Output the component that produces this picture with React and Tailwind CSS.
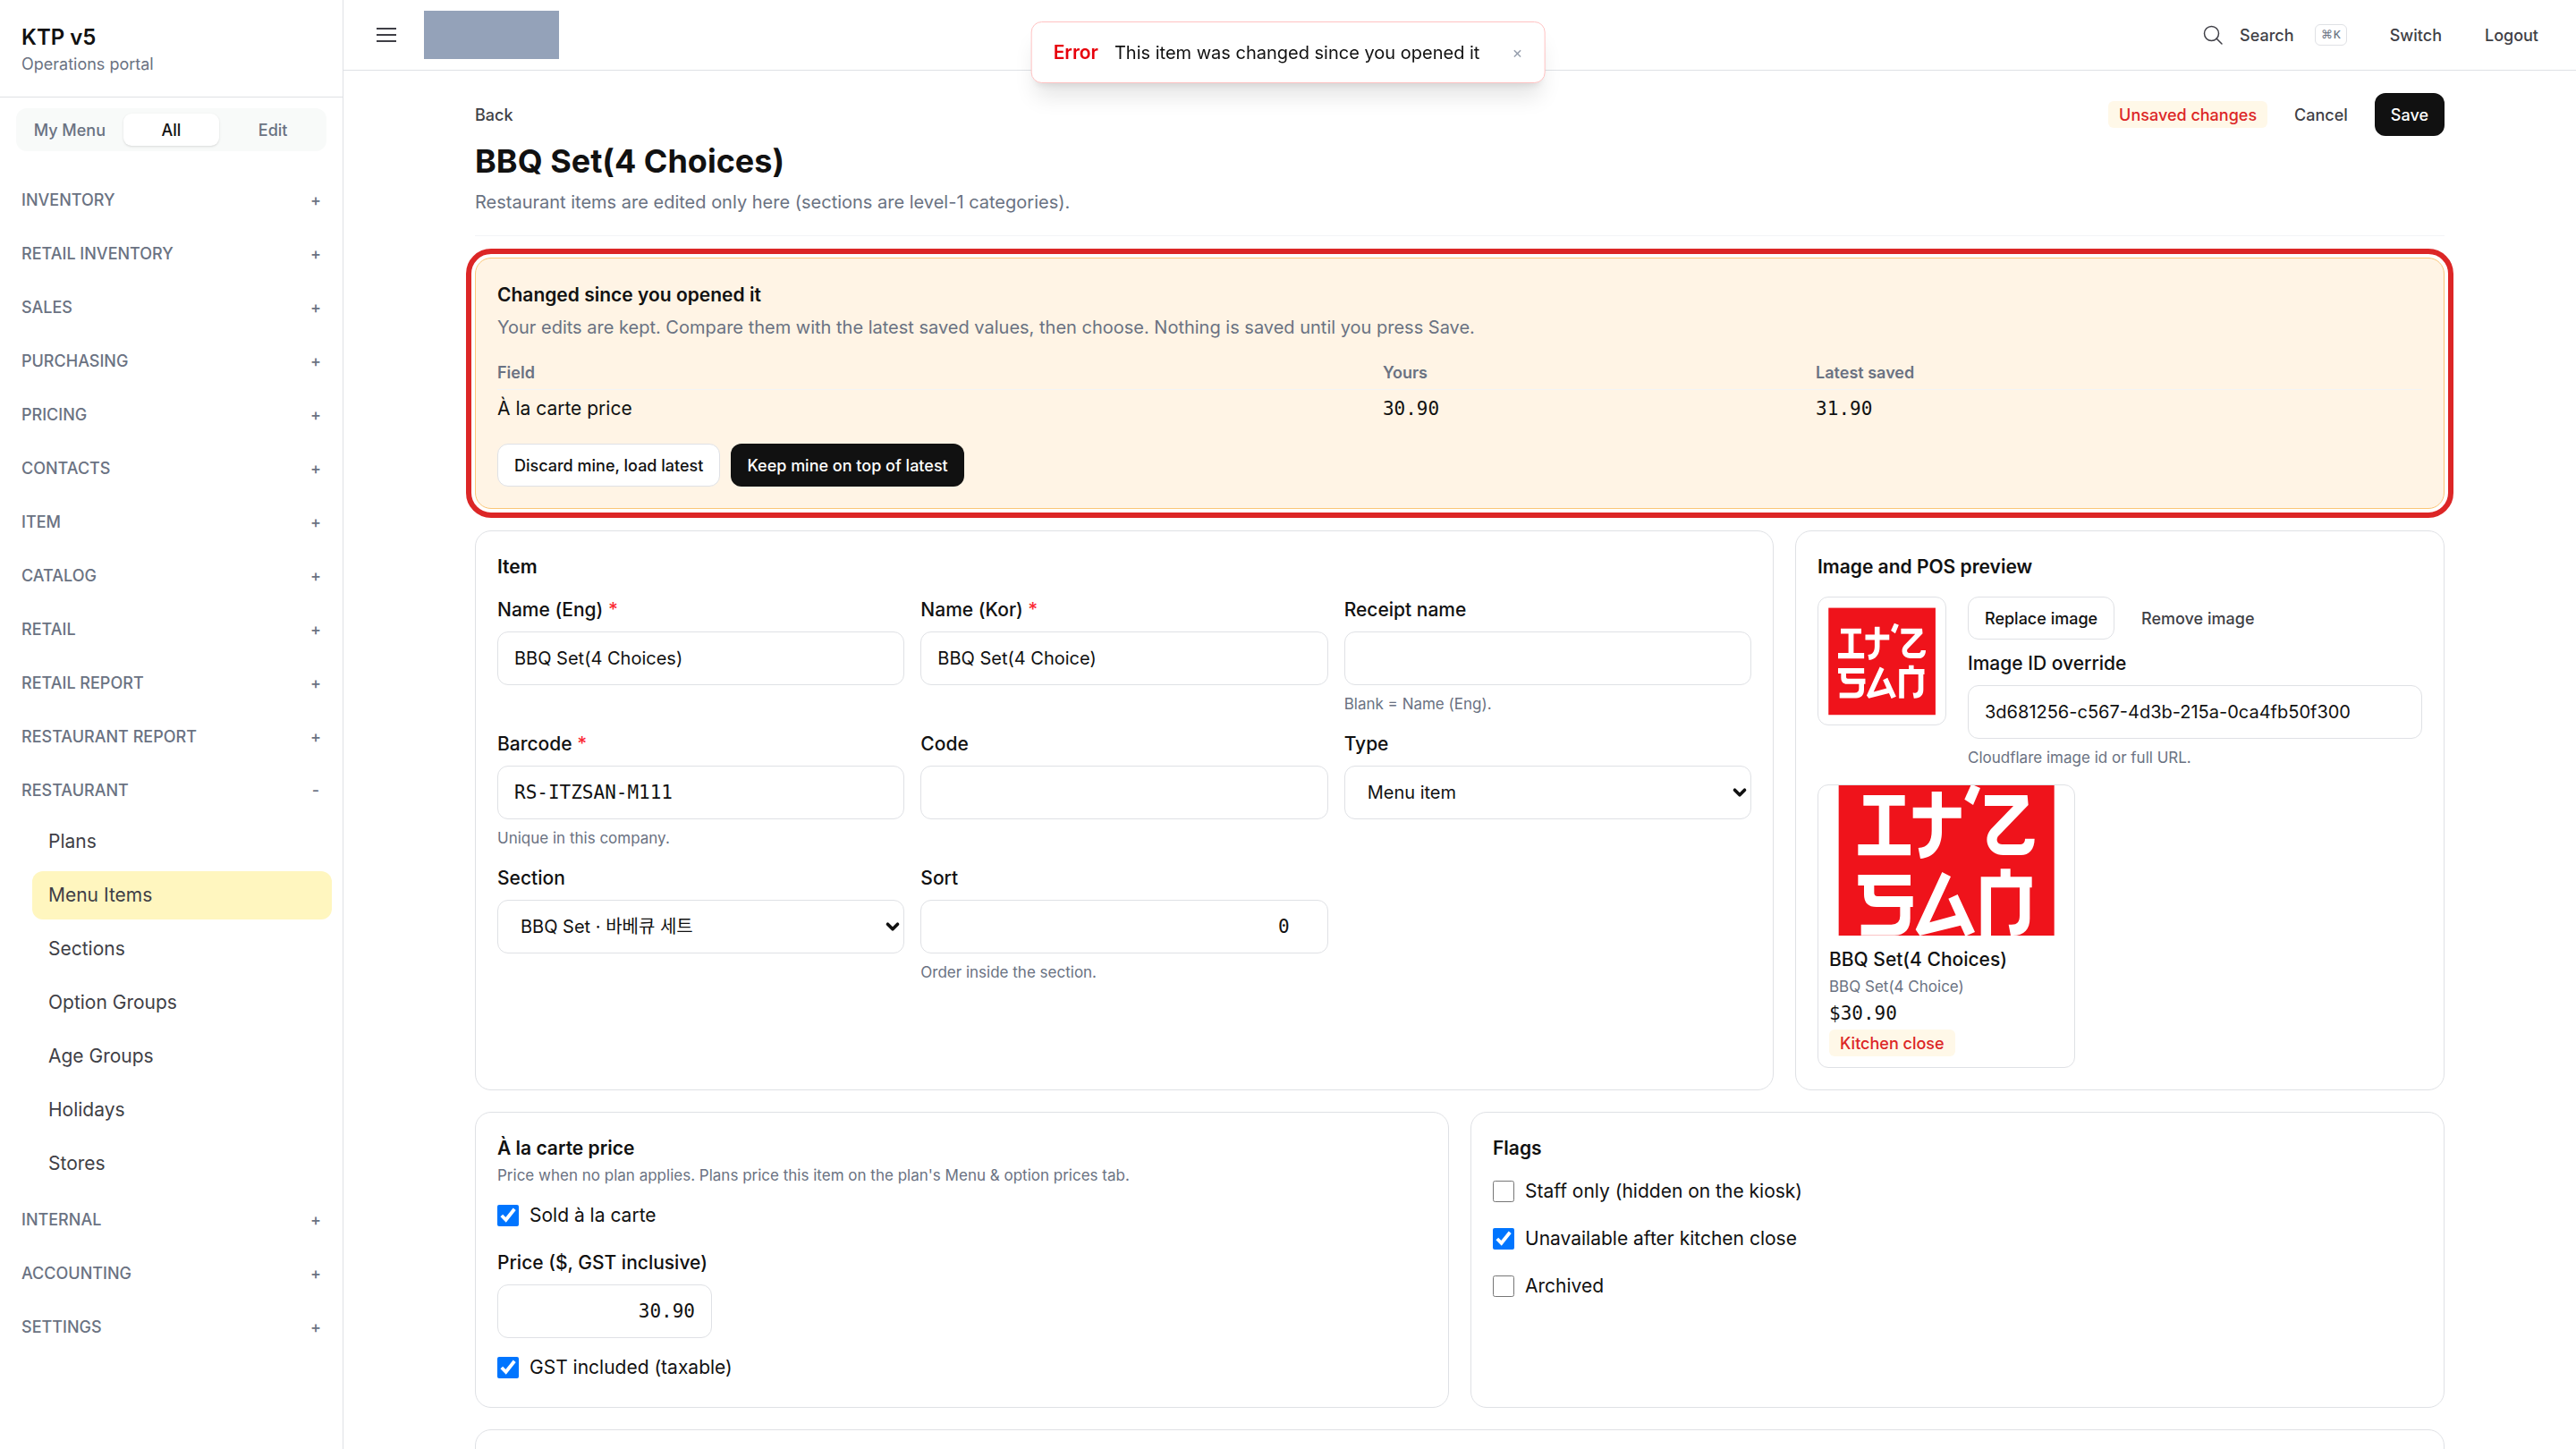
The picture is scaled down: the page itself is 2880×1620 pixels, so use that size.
import React, { useState } from "react";
import clsx from "clsx";
import { ChevronDown } from "lucide-react";

const menuGroups = [
    { name: "Inventory" },
    { name: "Retail inventory" },
    { name: "Sales" },
    { name: "Purchasing" },
    { name: "Pricing" },
    { name: "Contacts" },
    { name: "Item" },
    { name: "Catalog" },
    { name: "Retail" },
    { name: "Retail report" },
    { name: "Restaurant report" },
    {
        name: "Restaurant",
        items: ["Plans", "Menu Items", "Sections", "Option Groups", "Age Groups", "Holidays", "Stores"],
    },
    { name: "Internal" },
    { name: "Accounting" },
    { name: "Settings" },
];

const changes = [{ field: "À la carte price", yours: "30.90", latest: "31.90" }];

const inputClass = "h-[60px] w-full rounded-xl border border-[#dfe1e5] bg-white px-[18px] text-[#111111] outline-none";
const sansClass = "text-[20px]";
const monoClass = "font-[family-name:'DejaVu_Sans_Mono',monospace] text-[21px]";

function Logo({ className }) {
    return (
        <svg viewBox="10 -153 858 858" preserveAspectRatio="xMidYMid slice" className={className} role="img">
            <rect x="78" y="-83" width="723" height="723" fill="#ef131b" />
            <g fill="#fff">
                <path d="M161 57H300V92H248V222H319V259H143V222H213V92H161Z" />
                <path d="M390 45H424V98H489V134H424V180C424 230 398 267 352 270L345 234C378 232 390 210 390 176V134H327V98H390Z" />
                <path d="M523 20L553 33L529 90L500 71Z" />
                <path d="M568 57H711L714 90L612 196C604 210 612 222 626 222H684C697 222 703 215 703 203H735C735 240 715 258 690 258H630C580 258 560 205 588 172L664 93H568Z" />
                <path d="M143 324H319V360H197V385Q197 396 208 396H327V432H318V470C318 505 300 527 265 527H153V491H255Q284 491 284 462V432H205Q163 432 163 390V360H143Z" />
                <path d="M425 315L454 330L383 484L471 460L446 404L477 390L535 516L503 530L487 494L350 528L336 508Z" />
                <path d="M621 304H654V331H726V367H719V470C719 508 700 529 655 528L648 491C676 494 685 485 685 460V367H589V529H555V331H621Z" />
            </g>
        </svg>
    );
}

function Sidebar() {
    const [tab, setTab] = useState("All");

    return (
        <aside className="w-96 shrink-0 border-r border-[#dfe1e5]">
            <div className="h-[109px] border-b border-[#dfe1e5] px-6 pt-6">
                <p className="text-2xl leading-[36px] font-semibold">KTP v5</p>
                <p className="text-[18px] leading-[24px] text-gray-500">Operations portal</p>
            </div>
            <div className="mx-[18px] mt-3 grid grid-cols-3 gap-[6px] rounded-xl bg-[#f8faf9] p-[6px]">
                {["My Menu", "All", "Edit"].map((name) => (
                    <button
                        key={name}
                        type="button"
                        onClick={() => setTab(name)}
                        className={clsx(
                            "h-9 rounded-[9px] text-[18px] font-medium whitespace-nowrap",
                            tab === name ? "bg-white text-[#111111] shadow-sm" : "text-gray-500"
                        )}
                    >
                        {name}
                    </button>
                ))}
            </div>
            <nav className="mt-[27px] flex flex-col gap-[6px]">
                {menuGroups.map((group) => (
                    <div key={group.name}>
                        <button
                            type="button"
                            className="flex h-[54px] w-full items-center justify-between px-6 text-[18px] font-medium text-gray-500 uppercase"
                        >
                            {group.name}
                            <span className="w-3 text-center">{group.items ? "-" : "+"}</span>
                        </button>
                        {group.items && (
                            <div className="flex flex-col gap-[6px] pt-1 pr-3 pb-[2px] pl-9">
                                {group.items.map((item) => (
                                    <a
                                        key={item}
                                        href="#"
                                        className={clsx(
                                            "flex h-[54px] items-center rounded-xl px-[18px] text-[21px] text-[#3f3f46]",
                                            item === "Menu Items" && "bg-[#fff6bf]"
                                        )}
                                    >
                                        {item}
                                    </a>
                                ))}
                            </div>
                        )}
                    </div>
                ))}
            </nav>
        </aside>
    );
}

function TopBar() {
    return (
        <header className="flex h-[79px] items-center justify-between border-b border-[#dfe1e5] px-6">
            <div className="flex items-center">
                <button type="button" aria-label="Toggle menu" className="p-3 text-[#3f3f46]">
                    <svg viewBox="0 0 24 24" fill="none" stroke="currentColor" strokeWidth="2" className="size-6">
                        <path d="M1 5H23M1 12H23M1 19H23" />
                    </svg>
                </button>
                <div className="ml-[18px] h-[54px] w-[151px] bg-[#94a2b9]" />
            </div>
            <div className="flex items-center gap-3 text-[18px] font-medium text-[#3f3f46]">
                <button type="button" className="flex items-center gap-[18px] px-[18px]">
                    <svg viewBox="0 0 24 24" fill="none" stroke="currentColor" strokeWidth="1.5" className="size-6">
                        <circle cx="10.5" cy="10.5" r="8" />
                        <path d="M16 16L22 22" strokeLinecap="round" />
                    </svg>
                    Search
                    <kbd className="ml-[6px] flex h-6 items-center rounded-[6px] border border-[#dfe1e5] px-[6px] font-sans text-[13px] text-gray-500">
                        ⌘K
                    </kbd>
                </button>
                <button type="button" className="px-[18px]">
                    Switch
                </button>
                <button type="button" className="px-[18px]">
                    Logout
                </button>
            </div>
        </header>
    );
}

function Toast() {
    return (
        <div
            role="alert"
            className="fixed top-6 left-1/2 z-10 flex h-[69px] -translate-x-1/2 items-center gap-[18px] rounded-xl border border-[#ffc2c2] bg-white px-6 text-[20px] whitespace-nowrap shadow-xl"
        >
            <span className="text-[21px] font-semibold text-[#e7000b]">Error</span>
            <span>This item was changed since you opened it</span>
            <button type="button" aria-label="Close" className="pl-[18px] text-[18px] text-gray-400">
                ×
            </button>
        </div>
    );
}

function Badge({ children }) {
    return (
        <span className="flex h-[30px] w-fit items-center rounded-[6px] bg-[#fff8e8] px-3 text-[18px] font-medium text-[#dc2626]">
            {children}
        </span>
    );
}

function Button({ variant = "outline", children }) {
    return (
        <button
            type="button"
            className={clsx(
                "h-12 rounded-xl px-[18px] text-[18px] font-medium whitespace-nowrap",
                variant === "outline" && "border border-[#dfe1e5] bg-white text-[#111111]",
                variant === "solid" && "bg-[#111111] text-white",
                variant === "ghost" && "text-[#3f3f46]"
            )}
        >
            {children}
        </button>
    );
}

function Card({ title, className, children }) {
    return (
        <section className={clsx("rounded-[18px] border border-[#dfe1e5] bg-white px-6 pt-[25px] pb-6", className)}>
            {title && <h2 className="text-[21px] leading-[30px] font-semibold">{title}</h2>}
            {children}
        </section>
    );
}

function Hint({ children }) {
    return <p className="text-[17px] leading-[24px] text-gray-500">{children}</p>;
}

function Field({ id, label, required, hint, children }) {
    return (
        <div>
            <label htmlFor={id} className="mb-[9px] block text-[21px] leading-[30px] font-medium">
                {label} {required && <span className="text-red-500">*</span>}
            </label>
            {children}
            {hint && (
                <div className="mt-[9px]">
                    <Hint>{hint}</Hint>
                </div>
            )}
        </div>
    );
}

function Select({ id, options }) {
    return (
        <div className="relative">
            <select id={id} className={clsx(inputClass, sansClass, "appearance-none pl-[25px]")}>
                {options.map((option) => (
                    <option key={option}>{option}</option>
                ))}
            </select>
            <ChevronDown
                size={22}
                strokeWidth={4}
                className="pointer-events-none absolute top-[19px] right-[2px]"
            />
        </div>
    );
}

function Check({ label, defaultChecked }) {
    return (
        <label className="flex w-fit items-center gap-3 pb-[5px] text-[21px] leading-[30px]">
            <input type="checkbox" defaultChecked={defaultChecked} className="size-6 accent-[#0075ff]" />
            {label}
        </label>
    );
}

function ConflictCard() {
    return (
        <section className="rounded-[18px] border border-[#fbc678] bg-[#fff4e5] px-6 pt-[26px] pb-6 outline-6 outline-offset-4 outline-[#dc2626]">
            <h2 className="text-[21px] leading-[30px] font-semibold">Changed since you opened it</h2>
            <p className="mt-[6px] text-[20px] leading-[30px] text-gray-500">
                Your edits are kept. Compare them with the latest saved values, then choose. Nothing is saved until you
                press Save.
            </p>
            <table className="mt-[18px] w-full text-left">
                <thead>
                    <tr className="border-b border-gray-100 text-[18px] leading-[24px] text-gray-500">
                        <th className="w-[46%] py-[6px] font-semibold">Field</th>
                        <th className="w-[22.5%] py-[6px] font-semibold">Yours</th>
                        <th className="py-[6px] font-semibold">Latest saved</th>
                    </tr>
                </thead>
                <tbody>
                    {changes.map((change) => (
                        <tr key={change.field} className="text-[21px] leading-[30px]">
                            <td className="py-[6px]">{change.field}</td>
                            <td className="py-[6px] font-[family-name:'DejaVu_Sans_Mono',monospace]">{change.yours}</td>
                            <td className="py-[6px] font-[family-name:'DejaVu_Sans_Mono',monospace]">
                                {change.latest}
                            </td>
                        </tr>
                    ))}
                </tbody>
            </table>
            <div className="mt-[18px] flex gap-3">
                <Button>Discard mine, load latest</Button>
                <Button variant="solid">Keep mine on top of latest</Button>
            </div>
        </section>
    );
}

function ItemCard() {
    return (
        <Card title="Item">
            <div className="mt-[18px] grid grid-cols-3 gap-[18px]">
                <Field id="name-eng" label="Name (Eng)" required>
                    <input id="name-eng" defaultValue="BBQ Set(4 Choices)" className={clsx(inputClass, sansClass)} />
                </Field>
                <Field id="name-kor" label="Name (Kor)" required>
                    <input id="name-kor" defaultValue="BBQ Set(4 Choice)" className={clsx(inputClass, sansClass)} />
                </Field>
                <Field id="receipt-name" label="Receipt name" hint="Blank = Name (Eng).">
                    <input id="receipt-name" className={clsx(inputClass, sansClass)} />
                </Field>
                <Field id="barcode" label="Barcode" required hint="Unique in this company.">
                    <input id="barcode" defaultValue="RS-ITZSAN-M111" className={clsx(inputClass, monoClass)} />
                </Field>
                <Field id="code" label="Code">
                    <input id="code" className={clsx(inputClass, sansClass)} />
                </Field>
                <Field id="type" label="Type">
                    <Select id="type" options={["Menu item"]} />
                </Field>
                <Field id="section" label="Section">
                    <Select id="section" options={["BBQ Set · 바베큐 세트"]} />
                </Field>
                <Field id="sort" label="Sort" hint="Order inside the section.">
                    <input
                        id="sort"
                        inputMode="numeric"
                        defaultValue="0"
                        className={clsx(inputClass, monoClass, "pr-[42px] text-right")}
                    />
                </Field>
            </div>
        </Card>
    );
}

function PreviewCard() {
    return (
        <Card title="Image and POS preview">
            <div className="mt-[18px] flex items-start gap-6">
                <div className="size-36 shrink-0 overflow-hidden rounded-xl border border-[#dfe1e5]">
                    <Logo className="size-full" />
                </div>
                <div className="flex-1">
                    <div className="mb-3 flex gap-3">
                        <Button>Replace image</Button>
                        <Button variant="ghost">Remove image</Button>
                    </div>
                    <Field id="image-id" label="Image ID override" hint="Cloudflare image id or full URL.">
                        <input
                            id="image-id"
                            defaultValue="3d681256-c567-4d3b-215a-0ca4fb50f300"
                            className={clsx(inputClass, sansClass)}
                        />
                    </Field>
                </div>
            </div>
            <div className="mt-[18px] w-72 overflow-hidden rounded-xl border border-[#dfe1e5]">
                <Logo className="h-[168px] w-full" />
                <div className="flex flex-col gap-[3px] p-3">
                    <p className="text-[21px] leading-[30px] font-medium">BBQ Set(4 Choices)</p>
                    <Hint>BBQ Set(4 Choice)</Hint>
                    <p className={clsx("leading-[30px]", monoClass)}>$30.90</p>
                    <Badge>Kitchen close</Badge>
                </div>
            </div>
        </Card>
    );
}

function PriceCard() {
    return (
        <Card title="À la carte price">
            <div className="mt-[3px]">
                <Hint>Price when no plan applies. Plans price this item on the plan's Menu &amp; option prices tab.</Hint>
            </div>
            <div className="mt-[18px] flex flex-col gap-[18px]">
                <Check label="Sold à la carte" defaultChecked />
                <div className="w-60">
                    <Field id="price" label="Price ($, GST inclusive)">
                        <input
                            id="price"
                            inputMode="decimal"
                            defaultValue="30.90"
                            className={clsx(inputClass, monoClass, "text-right")}
                        />
                    </Field>
                </div>
                <Check label="GST included (taxable)" defaultChecked />
            </div>
        </Card>
    );
}

function FlagsCard() {
    return (
        <Card title="Flags">
            <div className="mt-[18px] flex flex-col gap-[18px]">
                <Check label="Staff only (hidden on the kiosk)" />
                <Check label="Unavailable after kitchen close" defaultChecked />
                <Check label="Archived" />
            </div>
        </Card>
    );
}

function App() {
    return (
        <div className="flex h-screen overflow-hidden bg-white font-[family-name:Inter,'Noto_Sans_CJK_KR',sans-serif] text-[#111111]">
            <Sidebar />
            <div className="min-w-0 flex-1">
                <TopBar />
                <main className="mx-auto max-w-[2250px] px-6 pt-[25px]">
                    <div className="border-b border-gray-100 pb-[22px]">
                        <div className="flex items-center justify-between">
                            <a href="#" className="text-[18px] font-medium text-[#3f3f46]">
                                Back
                            </a>
                            <div className="flex items-center gap-3">
                                <Badge>Unsaved changes</Badge>
                                <Button variant="ghost">Cancel</Button>
                                <Button variant="solid">Save</Button>
                            </div>
                        </div>
                        <h1 className="mt-[6px] text-[36px] leading-[45px] font-bold">BBQ Set(4 Choices)</h1>
                        <p className="mt-2 text-[20px] leading-[30px] text-gray-500">
                            Restaurant items are edited only here (sections are level-1 categories).
                        </p>
                    </div>
                    <div className="mt-6 flex flex-col gap-6">
                        <ConflictCard />
                        <div className="grid grid-cols-[2fr_1fr] gap-6">
                            <ItemCard />
                            <PreviewCard />
                        </div>
                        <div className="grid grid-cols-2 gap-6">
                            <PriceCard />
                            <FlagsCard />
                        </div>
                        <Card className="h-48" />
                    </div>
                </main>
            </div>
            <Toast />
        </div>
    );
}

export default App;
